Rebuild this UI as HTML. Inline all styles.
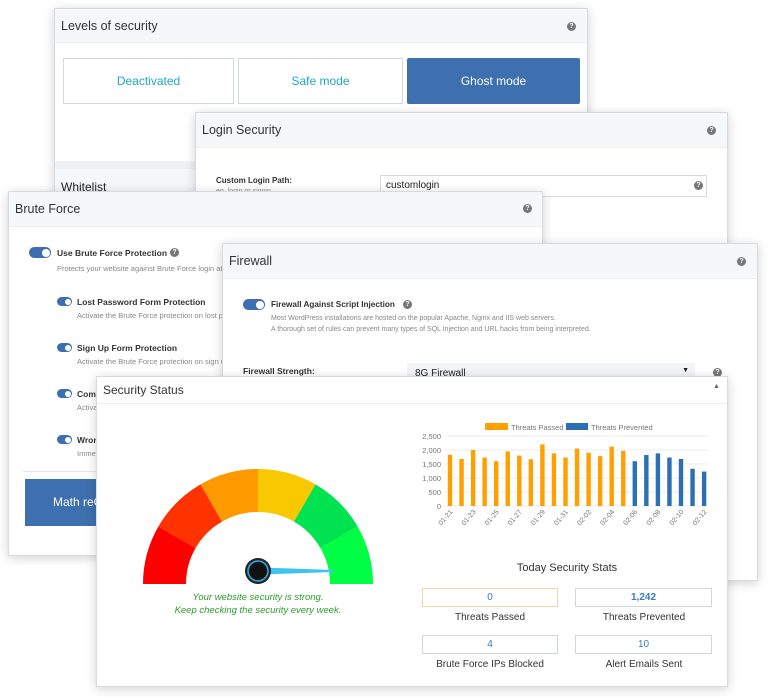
<!DOCTYPE html>
<html><head><meta charset="utf-8"><style>
*{box-sizing:border-box;margin:0;padding:0}
body{width:768px;height:698px;background:#fff;position:relative;overflow:hidden;font-family:"Liberation Sans",sans-serif;color:#222}
.p{position:absolute;background:#fff;border:1px solid #d8dade;box-shadow:0 2px 10px rgba(0,0,0,.18)}
.h{position:absolute;left:0;right:0;top:0;background:#f6f7f9;border-bottom:1px solid #eceef1;font-size:12.5px;color:#333;padding-left:6px}
.q{position:absolute;width:9px;height:9px;border-radius:50%;background:#777;color:#fff;font-size:7px;font-weight:bold;text-align:center;line-height:9px}
.a{position:absolute;white-space:nowrap}
.tg{position:absolute;border-radius:6px;background:#3b6fb1}
.tg:after{content:"";position:absolute;right:1.5px;top:1.5px;border-radius:50%;background:#fff}
.big{width:22px;height:11px}.big:after{width:8px;height:8px}
.sm{width:15px;height:9px}.sm:after{width:6px;height:6px}
.b{font-weight:bold;font-size:8.5px;color:#333}
.d{font-size:7.5px;color:#888}
.st{position:absolute;height:19px;border:1px solid #cfd6e0;text-align:center;font-size:10px;line-height:17px;color:#3a7ac0}
.sl{position:absolute;font-size:10px;color:#333;text-align:center;width:150px}
</style></head><body>

<div class="p" style="left:54px;top:8px;width:534px;height:240px">
 <div class="h" style="height:34px;line-height:34px">Levels of security</div>
 <div class="q" style="left:512px;top:13px">?</div>
 <div class="a" style="left:8px;top:49px;width:171px;height:46px;border:1px solid #cfd8e3;color:#1ea7c5;font-size:12px;text-align:center;line-height:44px">Deactivated</div>
 <div class="a" style="left:183px;top:49px;width:165px;height:46px;border:1px solid #cfd8e3;color:#1ea7c5;font-size:12px;text-align:center;line-height:44px">Safe mode</div>
 <div class="a" style="left:352px;top:49px;width:173px;height:46px;background:#3e6fae;border-radius:2px;color:#fff;font-size:12px;text-align:center;line-height:46px">Ghost mode</div>
 <div class="a" style="left:0;top:152px;width:534px;height:8px;background:#eef0f3"></div>
 <div class="a" style="left:0;top:160px;width:534px;height:40px;background:#f6f7f9;font-size:12px;padding:11px 6px">Whitelist</div>
</div>

<div class="p" style="left:195px;top:112px;width:533px;height:136px">
 <div class="h" style="height:35px;line-height:35px">Login Security</div>
 <div class="q" style="left:511px;top:13px">?</div>
 <div class="a b" style="left:20px;top:63px;font-size:8px">Custom Login Path:</div>
 <div class="a d" style="left:20px;top:75px;font-size:7px">eg. login or signin</div>
 <div class="a" style="left:184px;top:62px;width:327px;height:22px;border:1px solid #d5d8dc;font-size:10px;padding:4px 5px">customlogin</div>
 <div class="q" style="left:498px;top:68px">?</div>
</div>

<div class="p" style="left:8px;top:191px;width:535px;height:365px">
 <div class="h" style="height:35px;line-height:35px">Brute Force</div>
 <div class="q" style="left:514px;top:12px">?</div>
 <div class="tg big" style="left:20px;top:55px"></div>
 <div class="a b" style="left:48px;top:56px">Use Brute Force Protection</div>
 <div class="q" style="left:161px;top:56px">?</div>
 <div class="a d" style="left:48px;top:72px">Protects your website against Brute Force login attacks</div>
 <div class="tg sm" style="left:48px;top:105px"></div>
 <div class="a b" style="left:68px;top:105px">Lost Password Form Protection</div>
 <div class="a d" style="left:68px;top:119px">Activate the Brute Force protection on lost password form</div>
 <div class="tg sm" style="left:48px;top:151px"></div>
 <div class="a b" style="left:68px;top:151px">Sign Up Form Protection</div>
 <div class="a d" style="left:68px;top:165px">Activate the Brute Force protection on sign up form</div>
 <div class="tg sm" style="left:48px;top:197px"></div>
 <div class="a b" style="left:68px;top:197px">Comment Form Protection</div>
 <div class="a d" style="left:68px;top:211px">Activate</div>
 <div class="tg sm" style="left:48px;top:243px"></div>
 <div class="a b" style="left:68px;top:243px">Wrong Username Protection</div>
 <div class="a d" style="left:68px;top:257px">Immediately</div>
 <div class="a" style="left:14px;top:279px;width:510px;height:1px;background:#e5e7ea"></div>
 <div class="a" style="left:16px;top:287px;width:120px;height:47px;background:#3e6fae;color:#fff;font-size:12px;line-height:47px;padding-left:28px">Math reCAPTCHA</div>
</div>

<div class="p" style="left:222px;top:243px;width:536px;height:338px">
 <div class="h" style="height:35px;line-height:35px">Firewall</div>
 <div class="q" style="left:514px;top:13px">?</div>
 <div class="tg big" style="left:20px;top:55px"></div>
 <div class="a b" style="left:48px;top:56px;font-size:8.2px">Firewall Against Script Injection</div>
 <div class="q" style="left:180px;top:56px">?</div>
 <div class="a d" style="left:48px;top:71px;font-size:7px">Most WordPress installations are hosted on the popular Apache, Nginx and IIS web servers.</div>
 <div class="a d" style="left:48px;top:82px;font-size:7px">A thorough set of rules can prevent many types of SQL Injection and URL hacks from being interpreted.</div>
 <div class="a b" style="left:20px;top:122px">Firewall Strength:</div>
 <div class="a" style="left:184px;top:119px;width:288px;height:20px;background:#f3f4f6;font-size:10px;padding:5px 8px">8G Firewall<span style="position:absolute;right:6px;top:4px;font-size:7px">▼</span></div>
 <div class="q" style="left:490px;top:124px">?</div>
</div>

<div class="p" style="left:96px;top:376px;width:632px;height:311px">
 <div class="h" style="height:27px;line-height:27px;background:#fff;font-size:12px">Security Status</div>
 <div class="a" style="left:616px;top:6px;font-size:7px;color:#666">▲</div>
</div>

<svg class="a" style="left:0;top:0" width="768" height="698" viewBox="0 0 768 698">
 <g>
  <path d="M143 584 A115 115 0 0 1 158.4 526.5 L195.6 548 A72 72 0 0 0 186 584Z" fill="#ff0000"/>
  <path d="M158.4 526.5 A115 115 0 0 1 200.5 484.4 L222 521.6 A72 72 0 0 0 195.6 548Z" fill="#ff3300"/>
  <path d="M200.5 484.4 A115 115 0 0 1 258 469 L258 512 A72 72 0 0 0 222 521.6Z" fill="#ff9900"/>
  <path d="M258 469 A115 115 0 0 1 315.5 484.4 L294 521.6 A72 72 0 0 0 258 512Z" fill="#f8c800"/>
  <path d="M315.5 484.4 A115 115 0 0 1 357.6 526.5 L320.4 548 A72 72 0 0 0 294 521.6Z" fill="#00e24f"/>
  <path d="M357.6 526.5 A115 115 0 0 1 373 584 L330 584 A72 72 0 0 0 320.4 548Z" fill="#00ff44"/>
  <polygon points="262,567.5 334,570 334,572 262,574.5" fill="#3fc4f0"/>
  <circle cx="258" cy="571" r="13" fill="#222"/>
  <circle cx="258" cy="571" r="10" fill="none" stroke="#29a9e0" stroke-width="1.5"/>
  <circle cx="258" cy="571" r="8.5" fill="#111"/>
 </g>
 <g font-family="Liberation Sans, sans-serif" font-style="italic" font-size="9.5" fill="#2e9a2e" text-anchor="middle">
  <text x="258" y="600">Your website security is strong.</text>
  <text x="258" y="613">Keep checking the security every week.</text>
 </g>
 <g stroke="#eee" stroke-width="1">
  <line x1="445" y1="436" x2="708" y2="436"/><line x1="445" y1="450" x2="708" y2="450"/>
  <line x1="445" y1="464" x2="708" y2="464"/><line x1="445" y1="478" x2="708" y2="478"/>
  <line x1="445" y1="492" x2="708" y2="492"/><line x1="445" y1="506" x2="708" y2="506"/>
 </g>
 <g font-family="Liberation Sans, sans-serif" font-size="7.5" fill="#777" text-anchor="end">
  <text x="441" y="439">2,500</text><text x="441" y="453">2,000</text><text x="441" y="467">1,500</text>
  <text x="441" y="481">1,000</text><text x="441" y="495">500</text><text x="441" y="509">0</text>
 </g>
 <rect x="485" y="423" width="23" height="7" fill="#ff9f00"/>
 <rect x="566" y="423" width="22" height="7" fill="#2c6fb3"/>
 <g font-family="Liberation Sans, sans-serif" font-size="7.5" fill="#777">
  <text x="511" y="430">Threats Passed</text><text x="591" y="430">Threats Prevented</text>
 </g>
 <g id="bars"></g>
 <g id="xl" font-family="Liberation Sans, sans-serif" font-size="7" fill="#777"></g>
 <text x="567" y="571" font-family="Liberation Sans, sans-serif" font-size="11" fill="#333" text-anchor="middle">Today Security Stats</text>
</svg>

<div class="st" style="left:422px;top:588px;width:136px;border-color:#f3d3a8">0</div>
<div class="st" style="left:575px;top:588px;width:137px;font-weight:bold">1,242</div>
<div class="sl" style="left:415px;top:612px">Threats Passed</div>
<div class="sl" style="left:569px;top:612px">Threats Prevented</div>
<div class="st" style="left:422px;top:635px;width:136px">4</div>
<div class="st" style="left:575px;top:635px;width:137px">10</div>
<div class="sl" style="left:415px;top:659px">Brute Force IPs Blocked</div>
<div class="sl" style="left:569px;top:659px">Alert Emails Sent</div>

<script>
var v=[1830,1680,2000,1730,1600,1950,1800,1670,2200,1880,1730,2050,1900,1780,2120,1970,1600,1820,1880,1730,1680,1330,1230];
var lb=["01-21","01-23","01-25","01-27","01-29","01-31","02-02","02-04","02-06","02-08","02-10","02-12"];
var g=document.getElementById('bars'),x=document.getElementById('xl'),ns="http://www.w3.org/2000/svg";
v.forEach(function(n,i){var r=document.createElementNS(ns,'rect');var cx=450+11.55*i,h=n*0.028;
r.setAttribute('x',cx-2.2);r.setAttribute('y',506-h);r.setAttribute('width',4.4);r.setAttribute('height',h);
r.setAttribute('fill',i<16?'#ff9f00':'#2c6fb3');g.appendChild(r);
if(i%2==0){var t=document.createElementNS(ns,'text');t.textContent=lb[i/2];t.setAttribute('text-anchor','end');
t.setAttribute('transform','translate('+(cx+3)+',512) rotate(-50)');x.appendChild(t);}});
</script>
</body></html>
